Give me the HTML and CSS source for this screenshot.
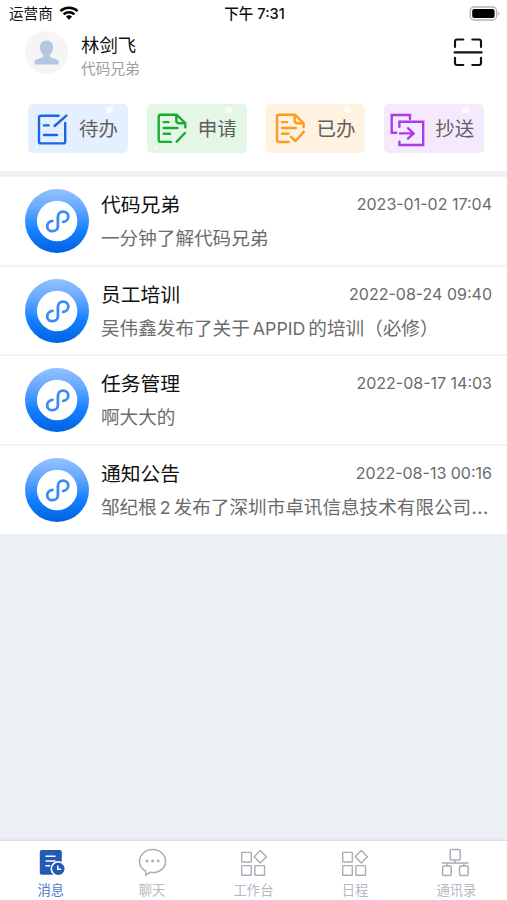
FILE: index.html
```html
<!DOCTYPE html>
<html lang="zh-CN">
<head>
    <meta charset="UTF-8">
    <meta name="viewport" content="width=device-width, initial-scale=1.0">
    <title>消息</title>
    <link rel="stylesheet" href="styles.css">
</head>
<body>
    <!-- 公用图标 -->
    <svg class="symbols" width="0" height="0">
        <defs>
            <linearGradient id="blue" x1="0" y1="0" x2="0" y2="1">
                <stop offset="0" stop-color="#94c2ff"/>
                <stop offset="0.3" stop-color="#66a8ff"/>
                <stop offset="0.65" stop-color="#1480ff"/>
                <stop offset="1" stop-color="#0061e0"/>
            </linearGradient>
            <symbol id="app-logo" viewBox="0 0 64 64">
                <circle cx="32" cy="32" r="32" fill="url(#blue)"/>
                <circle cx="32.1" cy="32" r="20.2" fill="#fff"/>
                <path d="M27.4 31.9C24.4 32.2 22.2 34.6 22.2 37.4C22.2 40.4 24.6 42.2 27.4 42.2C30.5 42.2 32.9 40 32.9 37.2V28C32.9 24.8 35 22.6 38 22.6C41 22.6 43.3 24.6 43.3 27.4C43.3 30.2 41 32.6 38.2 32.9" fill="none" stroke="#3b8bf5" stroke-width="2.8" stroke-linecap="round"/>
            </symbol>
            <symbol id="grid" viewBox="0 0 32 32">
                <g fill="none" stroke="#a9adb5" stroke-width="1.4" stroke-linejoin="round">
                    <rect x="3.7" y="5.4" width="9.6" height="9.6" rx="0.5"/>
                    <rect x="3.7" y="18.6" width="9.6" height="9.6" rx="0.5"/>
                    <rect x="16.9" y="18.6" width="9.6" height="9.6" rx="0.5"/>
                    <path d="M22.3 3.6L28.4 9.8L22.3 16L16.2 9.8Z"/>
                </g>
            </symbol>
        </defs>
    </svg>

    <div class="header">
        <div class="status-bar">
            <div class="carrier">
                <span>运营商</span>
                <svg width="20" height="14" viewBox="0 0 20 14" fill="none" stroke="#000" stroke-width="2.5">
                    <path d="M1.4 5.2C6.2 0.7 13.8 0.7 18.6 5.2"/>
                    <path d="M4.6 8.4C7.7 5.6 12.3 5.6 15.4 8.4"/>
                    <path d="M10 13.7L6.9 10.5C8.6 8.8 11.4 8.8 13.1 10.5Z" fill="#000" stroke="none"/>
                </svg>
            </div>
            <div class="time">下午 7:31</div>
            <div class="battery">
                <svg width="31" height="15" viewBox="0 0 31 15">
                    <rect x="1.2" y="1" width="26.4" height="13" rx="4" fill="#fff" stroke="#b3b3b3" stroke-width="1.3"/>
                    <rect x="3.2" y="3" width="22.4" height="9" rx="2" fill="#000"/>
                    <path d="M29.2 5.2C30.9 6 30.9 9 29.2 9.8Z" fill="#b3b3b3"/>
                </svg>
            </div>
        </div>

        <div class="user">
            <svg class="avatar" width="43" height="43" viewBox="0 0 43 43">
                <circle cx="21.5" cy="21.5" r="21.5" fill="#f5f5f5"/>
                <path d="M21.5 9.5C25.5 9.5 28 12.2 28 16C28 19.5 26.8 22 24.9 23.6V25.8C26.4 27.6 33.5 27.5 33.7 31V33.5H9.6V31C9.8 27.5 16.6 27.6 18.1 25.8V23.6C16.2 22 15 19.5 15 16C15 12.2 17.5 9.5 21.5 9.5Z" fill="#b5c6e2"/>
            </svg>
            <div class="user-text">
                <div class="user-name">林剑飞</div>
                <div class="user-org">代码兄弟</div>
            </div>
            <svg class="scan" width="32" height="32" viewBox="0 0 32 32" fill="none" stroke="#111" stroke-width="2.1" stroke-linecap="round">
                <path d="M11.3 3.5H5Q3 3.5 3 5.5V11M20.3 3.5H27Q29 3.5 29 5.5V11M3 21.8V27Q3 29 5 29H11.3M29 21.8V27Q29 29 27 29H20.3M2.6 16.4H29.6"/>
            </svg>
        </div>

        <div class="actions">
            <div class="action todo">
                <svg width="40" height="36" viewBox="-3 0 40 36">
                    <path d="M23.6 4.7H6Q4 4.7 4 6.7V30.4Q4 32.4 6 32.4H28.2Q30.2 32.4 30.2 30.4V12M19.6 15L31.4 4.6M9 14.4H13.6M9 24H22"/>
                </svg>
                <span>待办</span>
            </div>
            <div class="action apply">
                <svg width="40" height="36" viewBox="-3 0 40 36">
                    <path d="M17 30.9H6.7Q4.7 30.9 4.7 28.9V5.7Q4.7 3.7 6.7 3.7H22.5L31.3 12V16.2M22.3 4.2V9.5Q22.3 12.3 25.3 12.3H31M9.7 11.1H14.5M9.7 17H23.6M9.7 22.8H16M22.7 30.6L31 22"/>
                </svg>
                <span>申请</span>
            </div>
            <div class="action done">
                <svg width="40" height="36" viewBox="-3 0 40 36">
                    <path d="M15.8 31H6Q4 31 4 29V5.7Q4 3.7 6 3.7H21.8L30.6 12V16.2M21.6 4.2V9.5Q21.6 12.3 24.6 12.3H30.4M9 11.1H14M9 17H22.9M9 22.8H15.4M18 25.8L22.4 30.2L30.9 20.6"/>
                </svg>
                <span>已办</span>
            </div>
            <div class="action copy">
                <svg width="40" height="36" viewBox="-3 0 40 36">
                    <path d="M19 8V4H0.7V21.7H5.2M8.4 15.8V10.8H32.2V34H8.4V30.6M9 22.4H22M17 17.2L22.6 22.4L17 27.6"/>
                </svg>
                <span>抄送</span>
            </div>
        </div>
    </div>

    <div class="message-list">
        <div class="message">
            <svg class="logo" width="64" height="64"><use href="#app-logo"/></svg>
            <div class="message-body">
                <div class="message-top">
                    <h3>代码兄弟</h3>
                    <span class="date">2023-01-02 17:04</span>
                </div>
                <p>一分钟了解代码兄弟</p>
            </div>
        </div>
        <div class="message">
            <svg class="logo" width="64" height="64"><use href="#app-logo"/></svg>
            <div class="message-body">
                <div class="message-top">
                    <h3>员工培训</h3>
                    <span class="date">2022-08-24 09:40</span>
                </div>
                <p>吴伟鑫发布了关于<span class="latin">APPID</span>的培训（必修）</p>
            </div>
        </div>
        <div class="message">
            <svg class="logo" width="64" height="64"><use href="#app-logo"/></svg>
            <div class="message-body">
                <div class="message-top">
                    <h3>任务管理</h3>
                    <span class="date">2022-08-17 14:03</span>
                </div>
                <p>啊大大的</p>
            </div>
        </div>
        <div class="message">
            <svg class="logo" width="64" height="64"><use href="#app-logo"/></svg>
            <div class="message-body">
                <div class="message-top">
                    <h3>通知公告</h3>
                    <span class="date">2022-08-13 00:16</span>
                </div>
                <p>邹纪根<span class="latin">2</span>发布了深圳市卓讯信息技术有限公司<span class="more">…</span></p>
            </div>
        </div>
    </div>

    <div class="tab-bar">
        <div class="tab active">
            <svg width="32" height="32" viewBox="0 0 32 32">
                <rect x="4.8" y="3" width="22" height="24.8" rx="2" fill="#2459b4"/>
                <path d="M10.5 9.2H20.5M10.5 14H20.5M10.5 18.8H15" stroke="#fff" stroke-width="1.6"/>
                <circle cx="23.3" cy="21.8" r="7" fill="#2459b4" stroke="#fff" stroke-width="1.6"/>
                <path d="M22.8 18.5V22.3H26.2" fill="none" stroke="#fff" stroke-width="1.6"/>
            </svg>
            <span>消息</span>
        </div>
        <div class="tab">
            <svg width="32" height="32" viewBox="0 0 32 32">
                <path d="M9.6 24C5.9 22 3.5 18.3 3.5 14.2C3.5 7.7 9.3 2.6 16.6 2.6C23.8 2.6 29.6 7.7 29.6 14.2C29.6 20.7 23.8 25.6 16.6 25.6C15.6 25.6 14.7 25.5 13.9 25.3L9.9 28.2Z" fill="none" stroke="#a9adb5" stroke-width="1.5" stroke-linejoin="round"/>
                <g fill="#a9adb5">
                    <circle cx="11" cy="14" r="1.4"/>
                    <circle cx="16.6" cy="14" r="1.4"/>
                    <circle cx="22.2" cy="14" r="1.4"/>
                </g>
            </svg>
            <span>聊天</span>
        </div>
        <div class="tab">
            <svg width="32" height="32"><use href="#grid"/></svg>
            <span>工作台</span>
        </div>
        <div class="tab">
            <svg width="32" height="32"><use href="#grid"/></svg>
            <span>日程</span>
        </div>
        <div class="tab">
            <svg width="32" height="32" viewBox="0 0 32 32" fill="none" stroke="#a9adb5" stroke-width="1.5">
                <rect x="10.2" y="2.6" width="10" height="10.4" rx="1"/>
                <rect x="2.6" y="19" width="8.6" height="9.4" rx="1"/>
                <rect x="19.6" y="19" width="8.6" height="9.4" rx="1"/>
                <path d="M2 16H28.6M15.2 13V16M6.9 16V19M23.9 16V19"/>
            </svg>
            <span>通讯录</span>
        </div>
    </div>
</body>
</html>
```
FILE: styles.css
```css
/* 页面基本样式 */
body {
    font-family: Inter, "Noto Sans CJK SC", sans-serif;
    margin: 0;
    padding: 0;
    display: flex;
    flex-direction: column;
    height: 900px;
    overflow: hidden;
    background-color: #edf1f5;
    color: #111;
}

svg {
    display: block;
    flex-shrink: 0;
}

.symbols {
    position: absolute;
}

/* 顶部 */
.header {
    height: 171px;
    background-color: #fff;
    border-bottom: 6px solid #eef0f3;
}

.status-bar {
    display: grid;
    grid-template-columns: 1fr auto 1fr;
    align-items: center;
    height: 27px;
    padding: 0 7px 0 9px;
    font-size: 14.6px;
    line-height: 27px;
}

.carrier {
    display: flex;
    align-items: center;
    gap: 6px;
}

.carrier span,
.time {
    padding-top: 2px;
    line-height: 25px;
}

.carrier svg {
    margin-top: -1px;
}

.time {
    font-weight: 500;
}

.battery {
    display: flex;
    justify-content: flex-end;
}

.user {
    display: flex;
    align-items: center;
    height: 50px;
    padding: 0 23px 0 25px;
}

.user-text {
    flex: 1;
    margin-left: 13px;
    padding-top: 10px;
}

.user-name {
    font-size: 18.4px;
    line-height: 25px;
}

.user-org {
    font-size: 14.7px;
    line-height: 23px;
    color: #a0a0a0;
}

/* 快捷入口 */
.actions {
    display: grid;
    grid-template-columns: repeat(4, 1fr);
    gap: 19px;
    padding: 27px 23px 0 28px;
}

.action {
    position: relative;
    display: flex;
    align-items: center;
    height: 49px;
    padding-left: 4px;
    border-radius: 5px;
    font-size: 19.5px;
    color: #606060;
}

.action span {
    margin-left: 7px;
    padding-bottom: 2px;
    white-space: nowrap;
}

.action svg {
    fill: none;
    stroke-width: 2.4;
    stroke-linecap: round;
    stroke-linejoin: round;
}

/* 卡片上的白色小点 */
.action::before,
.action::after {
    content: "";
    position: absolute;
    background-color: #fff;
    opacity: 0.7;
    border-radius: 2px;
}

.action::before {
    left: 78px;
    top: 3px;
    width: 7px;
    height: 6px;
}

.action::after {
    left: 7px;
    bottom: 4px;
    width: 3px;
    height: 3px;
}

.todo {
    background-color: #e5f0fe;
}

.todo svg {
    stroke: #1668e8;
}

.apply {
    background-color: #e4f7e6;
}

.apply svg {
    stroke: #18ad32;
}

.done {
    background-color: #fff2e1;
}

.done svg {
    stroke: #fc9c20;
}

.copy {
    background-color: #f5eafd;
}

.copy svg {
    stroke: #ac3de6;
    stroke-linejoin: miter;
}

/* 消息列表 */
.message {
    display: flex;
    box-sizing: border-box;
    height: 89.6px;
    padding: 12px 15px 0 25px;
    background-color: #fff;
    border-bottom: 2px solid #f3f4f5;
}

.message:last-child {
    height: 88px;
    border-bottom: none;
}

.message-body {
    flex: 1;
    min-width: 0;
    margin-left: 12px;
}

.message-top {
    display: flex;
    justify-content: space-between;
    height: 32px;
}

.message h3 {
    margin: 0;
    font-size: 19.8px;
    font-weight: 400;
    line-height: 32px;
}

.date {
    font-size: 16px;
    line-height: 30px;
    color: #6a6a6a;
}

.message p {
    margin: 0;
    font-size: 18.6px;
    line-height: 34px;
    color: #6c6c6c;
    white-space: nowrap;
}

.latin {
    margin: 0 3px;
    font-size: 17.8px;
}

.more {
    letter-spacing: 1px;
    font-size: 20px;
}

/* 底部导航 */
.tab-bar {
    display: flex;
    height: 59px;
    margin-top: auto;
    background-color: #fff;
    border-top: 1px solid #dadde1;
    box-shadow: 0 -1px 3px rgba(0, 0, 0, 0.06);
}

.tab {
    flex: 1;
    display: flex;
    flex-direction: column;
    align-items: center;
    padding-top: 6px;
    font-size: 13.3px;
    line-height: 22px;
    color: #b6b9bf;
}

.active {
    color: #4d7bc6;
}
```
